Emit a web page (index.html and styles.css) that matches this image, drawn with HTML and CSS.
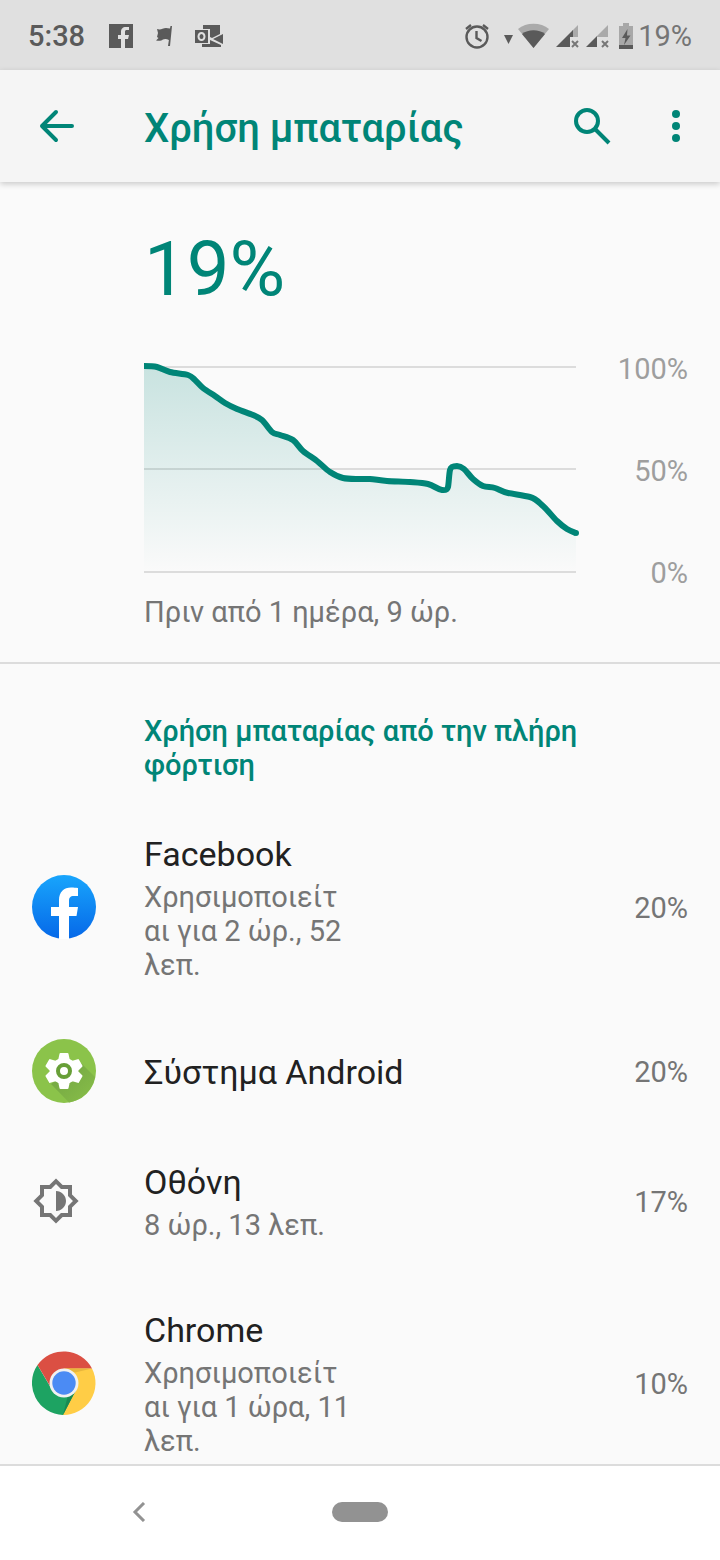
FILE: index.html
```html
<!DOCTYPE html>
<html lang="el">

<head>
    <meta charset="UTF-8">
    <meta name="viewport" content="width=device-width, initial-scale=1.0">
    <title>Χρήση μπαταρίας</title>

    <link rel="stylesheet" href="styles.css">
</head>

<body>
    <div class="status-bar">
        <span class="clock">5:38</span>
        <div class="notifications">
            <svg width="24" height="24" viewBox="0 0 24 24">
                <path fill="#5a5a5a" fill-rule="evenodd" d="M0 0h24v24h-8v-9h3l1-4h-4V8c0-1.500.5-2 2-2h2V3h-3c-3.500 0-5 2-5 5v3H9v4h3v9H0z" />
            </svg>
            <svg width="16" height="20" viewBox="0 0 16 20">
                <path fill="#5a5a5a" d="M14.500 0H16l-2 20h-2l.9-6c-2-1-4-1.500-6-.5-2 1.700-4 1.500-6.900 1l2.500-2.500L1 11l1-4-1-4c2 .8 4 .5 5.500-.3C9 1.500 11 1.800 14 2.500z" />
            </svg>
            <svg width="28" height="22" viewBox="0 0 28 22">
                <path fill="#5a5a5a" d="M8 0h17v9l-8 4-2-1V4H8zM0 5h13v13H0zM28 9v10l-10-5zM7 19h8v-4l11 5v2H7z" />
                <ellipse cx="6.500" cy="11.500" rx="3" ry="3.500" fill="none" stroke="#e0e0e0" stroke-width="2" />
            </svg>
        </div>
        <div class="indicators">
            <svg width="26" height="26" viewBox="0 0 26 26" fill="none" stroke="#5a5a5a" stroke-width="2.400">
                <circle cx="13" cy="14" r="10.500" />
                <path d="M12.500 8v7l5 3M2 6l5-4M24 6l-5-4" />
            </svg>
            <svg class="wifi" width="46" height="26" viewBox="0 0 46 26">
                <path fill="#5a5a5a" d="M1 12h9l-4.500 9z" />
                <path fill="#aaa" d="M15 6c8-7 23-7 31 0L30.500 25z" />
                <path fill="#5a5a5a" d="M19 11c6-5 17-5 23 0L30.500 25z" />
            </svg>
            <svg width="23" height="24" viewBox="0 0 23 24">
                <path fill="#aaa" d="M22 1v12h-6V7z" />
                <path fill="#5a5a5a" d="M0 23L17 6v7h-3v10z" />
                <path stroke="#777" stroke-width="2" d="M16 17l6 6M22 17l-6 6" />
            </svg>
            <svg width="23" height="24" viewBox="0 0 23 24">
                <path fill="#aaa" d="M22 1v12h-11v-1z" />
                <path fill="#5a5a5a" d="M0 23l11-11v11z" />
                <path stroke="#777" stroke-width="2" d="M16 17l6 6M22 17l-6 6" />
            </svg>
            <svg class="battery" width="14" height="26" viewBox="0 0 14 26">
                <path fill="#a8a8a8" d="M4 0h6v3h4v23H0V3h4z" />
                <path fill="#5a5a5a" d="M0 22h14v4H0zM8.500 6L3 15h3.500L5 22l6.500-9.500H8z" />
            </svg>
            <span class="charge">19%</span>
        </div>
    </div>

    <header class="app-bar">
        <button type="button" class="icon-button" aria-label="Πίσω">
            <svg width="48" height="48" viewBox="0 0 48 48" fill="none" stroke="#008577" stroke-width="4" stroke-linecap="round" stroke-linejoin="round">
                <path d="M40 24H10M24 10L10 24l14 14" />
            </svg>
        </button>
        <h1>Χρήση μπαταρίας</h1>
        <button type="button" class="icon-button" aria-label="Αναζήτηση">
            <svg width="48" height="48" viewBox="0 0 48 48" fill="none" stroke="#008577" stroke-width="4">
                <circle cx="19" cy="19" r="11" />
                <path d="M27 27l14 14" />
            </svg>
        </button>
        <button type="button" class="icon-button" aria-label="Περισσότερα">
            <svg width="48" height="48" viewBox="0 0 48 48" fill="#008577">
                <circle cx="24" cy="12" r="4" />
                <circle cx="24" cy="24" r="4" />
                <circle cx="24" cy="36" r="4" />
            </svg>
        </button>
    </header>

    <main>
        <section class="summary">
            <p class="level">19%</p>
            <div class="chart">
                <svg height="208" viewBox="0 0 432 208" preserveAspectRatio="none">
                    <defs>
                        <linearGradient id="fade" x1="0" y1="0" x2="0" y2="1">
                            <stop offset="0" stop-color="#008577" stop-opacity="0.2" />
                            <stop offset="1" stop-color="#008577" stop-opacity="0" />
                        </linearGradient>
                    </defs>
                    <path fill="#dcdcdc" d="M0 0h432v2H0zM0 102h432v2H0zM0 205h432v2H0z" />
                    <path fill="url(#fade)" d="M0 0C4 0 9 0 13 1S21 4.700 26 6S39.800 7.700 44 9S48.500 11.800 51 14S55.700 19.300 59 22S67.300 27.500 71 30S77.300 34.800 81 37S88.300 41 93 43S104.800 47.200 109 49S114.800 51.200 118 54S125 63.500 128 66S132.500 67.700 136 69S145.200 71.300 149 74S155 81.500 159 85S168.500 91.500 173 95S181.700 103.200 186 106S194 110.800 199 112S211.500 112.800 216 113S221.500 112.700 226 113S236.300 114.500 243 115S259.200 115.500 266 116S278.700 116.700 284 118S294 123.500 298 124S303.200 124 304 121S305 108 306 104S310 100 313 100S317.300 100.800 320 103S325.800 110.200 329 113S335.300 118.500 339 120S346.800 120.700 351 122S358.200 125.800 364 127S380 129.500 386 131S394.500 136 399 140S409 151.200 413 155S419.800 161 423 163S428 165.500 432 167V206H0z" />
                    <path class="line" d="M0 0C4 0 9 0 13 1S21 4.700 26 6S39.800 7.700 44 9S48.500 11.800 51 14S55.700 19.300 59 22S67.300 27.500 71 30S77.300 34.800 81 37S88.300 41 93 43S104.800 47.200 109 49S114.800 51.200 118 54S125 63.500 128 66S132.500 67.700 136 69S145.200 71.300 149 74S155 81.500 159 85S168.500 91.500 173 95S181.700 103.200 186 106S194 110.800 199 112S211.500 112.800 216 113S221.500 112.700 226 113S236.300 114.500 243 115S259.200 115.500 266 116S278.700 116.700 284 118S294 123.500 298 124S303.200 124 304 121S305 108 306 104S310 100 313 100S317.300 100.800 320 103S325.800 110.200 329 113S335.300 118.500 339 120S346.800 120.700 351 122S358.200 125.800 364 127S380 129.500 386 131S394.500 136 399 140S409 151.200 413 155S419.800 161 423 163S428 165.500 432 167" />
                    <circle cx="432" cy="167" r="3" fill="#008577" />
                </svg>
                <div class="axis">
                    <span>100%</span>
                    <span>50%</span>
                    <span>0%</span>
                </div>
            </div>
            <p class="since">Πριν από 1 ημέρα, 9 ώρ.</p>
        </section>

        <section>
            <h2>Χρήση μπαταρίας από την πλήρη φόρτιση</h2>
            <ul class="usage-list">
                <li>
                    <div class="app-icon">
                        <svg width="64" height="64" viewBox="0 0 64 64">
                            <defs>
                                <linearGradient id="fb" x1="0" y1="0" x2="0" y2="1">
                                    <stop offset="0" stop-color="#18a5fc" />
                                    <stop offset="1" stop-color="#0668e8" />
                                </linearGradient>
                            </defs>
                            <circle cx="32" cy="32" r="32" fill="url(#fb)" />
                            <path fill="#fff" d="M27 64V41h-8v-9h8v-7c0-8 5-12.500 12-12.500 3 0 4.500.2 7 .5v8h-4c-4 0-5 2-5 5v6h9l-1.500 9H37v23a32 32 0 0 1-10 0z" />
                        </svg>
                    </div>
                    <div class="details">
                        <h3>Facebook</h3>
                        <p>Χρησιμοποιείται για 2 ώρ., 52 λεπ.</p>
                    </div>
                    <span class="percent">20%</span>
                </li>
                <li>
                    <div class="app-icon">
                        <svg width="64" height="64" viewBox="0 0 64 64">
                            <defs>
                                <linearGradient id="shade" x1="0.2" y1="0.2" x2="0.9" y2="0.9">
                                    <stop offset="0" stop-color="#75a843" />
                                    <stop offset="1" stop-color="#86bc48" />
                                </linearGradient>
                            </defs>
                            <circle cx="32" cy="32" r="32" fill="#8bc34a" />
                            <path fill="url(#shade)" d="M49 24l14 14A32 32 0 0 1 37 63.500L19 45z" />
                            <path fill="#fff" stroke="#fff" stroke-width="2" stroke-linejoin="round" d="M28.500 15h7l1.200 5.500 4 2.300 5.300-1.700 3.500 6-4 3.900v2l4 3.900-3.500 6-5.300-1.700-4 2.300L35.500 49h-7l-1.200-5.500-4-2.300-5.300 1.700-3.500-6 4-3.900v-2l-4-3.900 3.500-6 5.300 1.700 4-2.300z" />
                            <circle cx="32" cy="32" r="6" fill="#fff" stroke="#689f38" stroke-width="4" />
                        </svg>
                    </div>
                    <div class="details">
                        <h3>Σύστημα Android</h3>
                    </div>
                    <span class="percent">20%</span>
                </li>
                <li>
                    <div class="app-icon">
                        <svg width="48" height="48" viewBox="0 0 24 24" fill="#757575">
                            <path d="M20 15.310L23.310 12 20 8.690V4h-4.690L12 .69 8.690 4H4v4.690L.69 12 4 15.310V20h4.690L12 23.310 15.310 20H20zM18 14.480V18h-3.520L12 20.480 9.520 18H6v-3.520L3.520 12 6 9.520V6h3.520L12 3.520 14.480 6H18v3.520L20.480 12zM12 7v10c2.760 0 5-2.240 5-5s-2.240-5-5-5z" fill-rule="evenodd" />
                        </svg>
                    </div>
                    <div class="details">
                        <h3>Οθόνη</h3>
                        <p>8 ώρ., 13 λεπ.</p>
                    </div>
                    <span class="percent">17%</span>
                </li>
                <li>
                    <div class="app-icon">
                        <svg width="64" height="64" viewBox="0 0 64 64">
                            <path fill="#ffcd46" d="M60 17.500A32 32 0 0 1 31 64l1-47z" />
                            <path fill="#1da362" d="M5.500 14A32 32 0 0 0 31 64l13-25-12 6-13-8z" />
                            <path fill="#178a52" d="M44 39L31 64l5-20z" />
                            <path fill="#db4f43" d="M5.500 14A32 32 0 0 1 60 17.500H32L18 35z" />
                            <path fill="#e8b63c" d="M34 17.500h26l-17 4z" />
                            <circle cx="32" cy="32" r="14.500" fill="#f1f1f1" />
                            <circle cx="32" cy="32" r="11.700" fill="#4b8bf4" />
                        </svg>
                    </div>
                    <div class="details">
                        <h3>Chrome</h3>
                        <p>Χρησιμοποιείται για 1 ώρα, 11 λεπ.</p>
                    </div>
                    <span class="percent">10%</span>
                </li>
            </ul>
        </section>
    </main>

    <nav class="nav-bar">
        <button type="button" class="nav-back" aria-label="Πίσω">
            <svg width="14" height="20" viewBox="0 0 14 20" fill="none" stroke="#929292" stroke-width="3">
                <path d="M12 1l-9 9 9 9" />
            </svg>
        </button>
        <button type="button" class="nav-home" aria-label="Αρχική οθόνη"></button>
    </nav>
</body>

</html>
```
FILE: styles.css
```css
* {
    margin: 0;
    padding: 0;
    box-sizing: border-box;
}

body {
    display: flex;
    flex-direction: column;
    height: 100vh;
    background-color: #fafafa;
    color: #757575;
    font-family: Roboto, sans-serif;
    font-size: 29px;
    line-height: 34px;
}

svg {
    display: block;
    flex: none;
}

button {
    border: none;
    background: none;
    cursor: pointer;
}

/* Status bar */
.status-bar {
    display: flex;
    align-items: center;
    flex: none;
    height: 70px;
    padding: 2px 28px 0;
    background-color: #e0e0e0;
}

.clock {
    color: #5a5a5a;
    font-weight: 500;
}

.notifications {
    display: flex;
    align-items: center;
    gap: 23px;
    margin-left: 24px;
}

.indicators {
    display: flex;
    align-items: center;
    gap: 7px;
    margin-left: auto;
}

.wifi {
    margin-left: 6px;
}

.battery {
    margin-left: 3px;
    margin-right: -2px;
}

/* App bar */
.app-bar {
    display: flex;
    align-items: center;
    flex: none;
    height: 112px;
    padding: 0 20px 0 32px;
    background-color: #f5f5f5;
    box-shadow: 0 2px 6px rgba(0, 0, 0, 0.2);
    z-index: 1;
}

.icon-button {
    width: 48px;
    height: 48px;
}

h1 {
    flex: 1;
    margin-left: 64px;
    padding-top: 6px;
    color: #008577;
    font-size: 40px;
    font-weight: 500;
    line-height: 48px;
}

.icon-button:last-child {
    margin-left: 36px;
}

main {
    flex: 1;
    min-height: 0;
    overflow-y: auto;
    scrollbar-width: none;
}

/* Battery level and chart */
.summary {
    padding: 43px 32px 33px 144px;
    border-bottom: 2px solid #dcdcdc;
}

.level {
    color: #008577;
    font-size: 76px;
    line-height: 88px;
}

.chart {
    display: flex;
    margin-top: 53px;
}

.chart svg {
    flex: 1;
    min-width: 0;
    overflow: visible;
}

.line {
    fill: none;
    stroke: #008577;
    stroke-width: 6px;
    stroke-linejoin: round;
}

.axis {
    display: flex;
    flex-direction: column;
    justify-content: space-between;
    width: 112px;
    margin: -14px 0 -16px;
    color: #9e9e9e;
    text-align: right;
}

.since {
    margin-top: 21px;
}

/* Usage list */
h2 {
    padding: 50px 120px 18px 144px;
    color: #008577;
    font-size: 29px;
    font-weight: 500;
    line-height: 34px;
}

.usage-list {
    list-style: none;
}

.usage-list li {
    display: flex;
    align-items: center;
    min-height: 112px;
    padding: 34px 32px;
}

/* Tall icons must not stretch single-line rows */
.app-icon {
    width: 112px;
    margin: -17px 0 -15px;
}

.details {
    flex: 1;
}

.details h3 {
    color: #212121;
    font-size: 34px;
    font-weight: 400;
    line-height: 40px;
}

.details p {
    max-width: 208px;
    margin-top: 6px;
    overflow-wrap: anywhere;
}

/* Navigation bar */
.nav-bar {
    display: grid;
    grid-template-columns: 1fr auto 1fr;
    align-items: center;
    flex: none;
    height: 96px;
    padding-bottom: 2px;
    border-top: 2px solid #dcdcdc;
    background-color: #fff;
}

.nav-back {
    justify-self: center;
    padding: 16px;
    margin-right: 54px;
}

.nav-home {
    width: 56px;
    height: 20px;
    border-radius: 10px;
    background-color: #929292;
}
```
